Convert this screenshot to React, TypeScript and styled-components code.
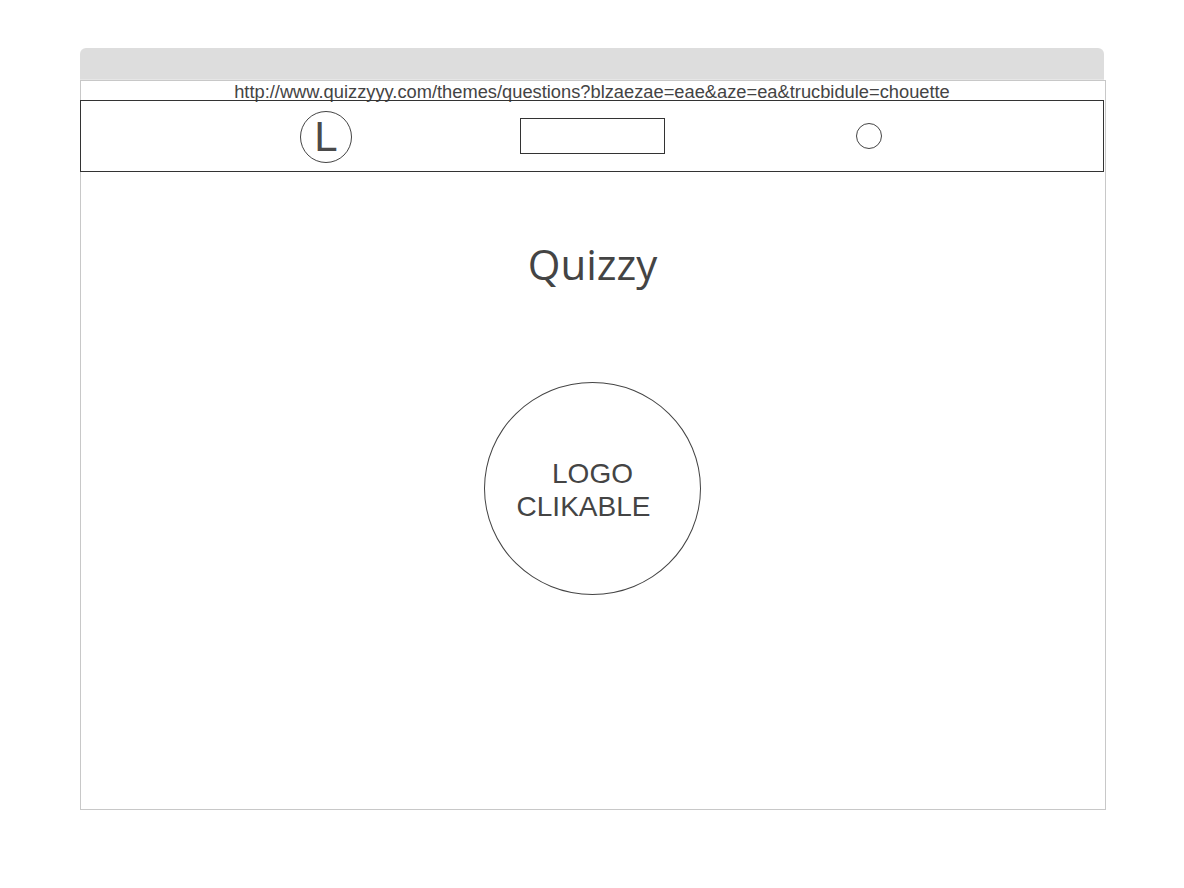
import React from "react";
import styled, { createGlobalStyle } from "styled-components";

const Global = createGlobalStyle`
  html, body { margin: 0; padding: 0; background: #ffffff; }
  body { font-family: "Liberation Sans", Arial, sans-serif; color: #444444; }
`;

const Page = styled.div`
  padding: 48px 0 0 80px;
`;

const Browser = styled.div`
  width: 1026px;
  display: flex;
  flex-direction: column;
`;

const TitleBar = styled.div`
  width: 1024px;
  height: 31px;
  background: #dddddd;
  border-radius: 6px 6px 0 0;
  border-bottom: 1px solid #e6e6e6;
`;

const Frame = styled.div`
  height: 728px;
  border: 1px solid #c8c8c8;
  display: flex;
  flex-direction: column;
`;

const Url = styled.div`
  height: 19px;
  padding-top: 1px;
  box-sizing: border-box;
  line-height: 19px;
  font-size: 18.3px;
  text-align: center;
  white-space: nowrap;
  color: #444444;
  padding-right: 2px;
`;

const Nav = styled.nav`
  margin-left: -1px;
  width: 1024px;
  height: 72px;
  box-sizing: border-box;
  border: 1px solid #333333;
  display: flex;
  align-items: center;
  padding-left: 219px;
`;

const Avatar = styled.div`
  width: 50px;
  height: 50px;
  border: 1px solid #444444;
  border-radius: 50%;
  display: flex;
  align-items: center;
  justify-content: center;
  font-size: 42px;
  line-height: 1;
  color: #4a4a4a;
  margin-top: 1px;
`;

const SearchBox = styled.div`
  width: 143px;
  height: 34px;
  border: 1px solid #333333;
  margin-left: 168px;
`;

const Dot = styled.div`
  width: 24px;
  height: 24px;
  border: 1px solid #444444;
  border-radius: 50%;
  margin-left: 191px;
`;

const Main = styled.main`
  display: flex;
  flex-direction: column;
  align-items: center;
`;

const Title = styled.h1`
  margin: 66px 0 0;
  font-family: "Open Sans", "Noto Sans", sans-serif;
  font-weight: 400;
  font-size: 42px;
  line-height: 52px;
  color: #444444;
  padding-right: 1px;
`;

const LogoButton = styled.button`
  margin-top: 92px;
  margin-right: 1px;
  width: 217px;
  height: 213px;
  border: 1px solid #444444;
  border-radius: 50%;
  background: #ffffff;
  display: flex;
  flex-direction: column;
  align-items: center;
  justify-content: center;
  font-family: "Liberation Sans", Arial, sans-serif;
  font-size: 28px;
  line-height: 33px;
  color: #444444;
  cursor: pointer;
  padding: 2px 0 0;
`;

const LogoLine = styled.span<{ $shift?: number }>`
  display: block;
  margin-right: ${(p) => (p.$shift ? `${p.$shift}px` : "0")};
`;

export default function App() {
  return (
    <>
      <Global />
      <Page>
        <Browser>
          <TitleBar />
          <Frame>
            <Url>http://www.quizzyyy.com/themes/questions?blzaezae=eae&amp;aze=ea&amp;trucbidule=chouette</Url>
            <Nav>
              <Avatar>L</Avatar>
              <SearchBox />
              <Dot />
            </Nav>
            <Main>
              <Title>Quizzy</Title>
              <LogoButton>
                <LogoLine>LOGO</LogoLine>
                <LogoLine $shift={18}>CLIKABLE</LogoLine>
              </LogoButton>
            </Main>
          </Frame>
        </Browser>
      </Page>
    </>
  );
}
